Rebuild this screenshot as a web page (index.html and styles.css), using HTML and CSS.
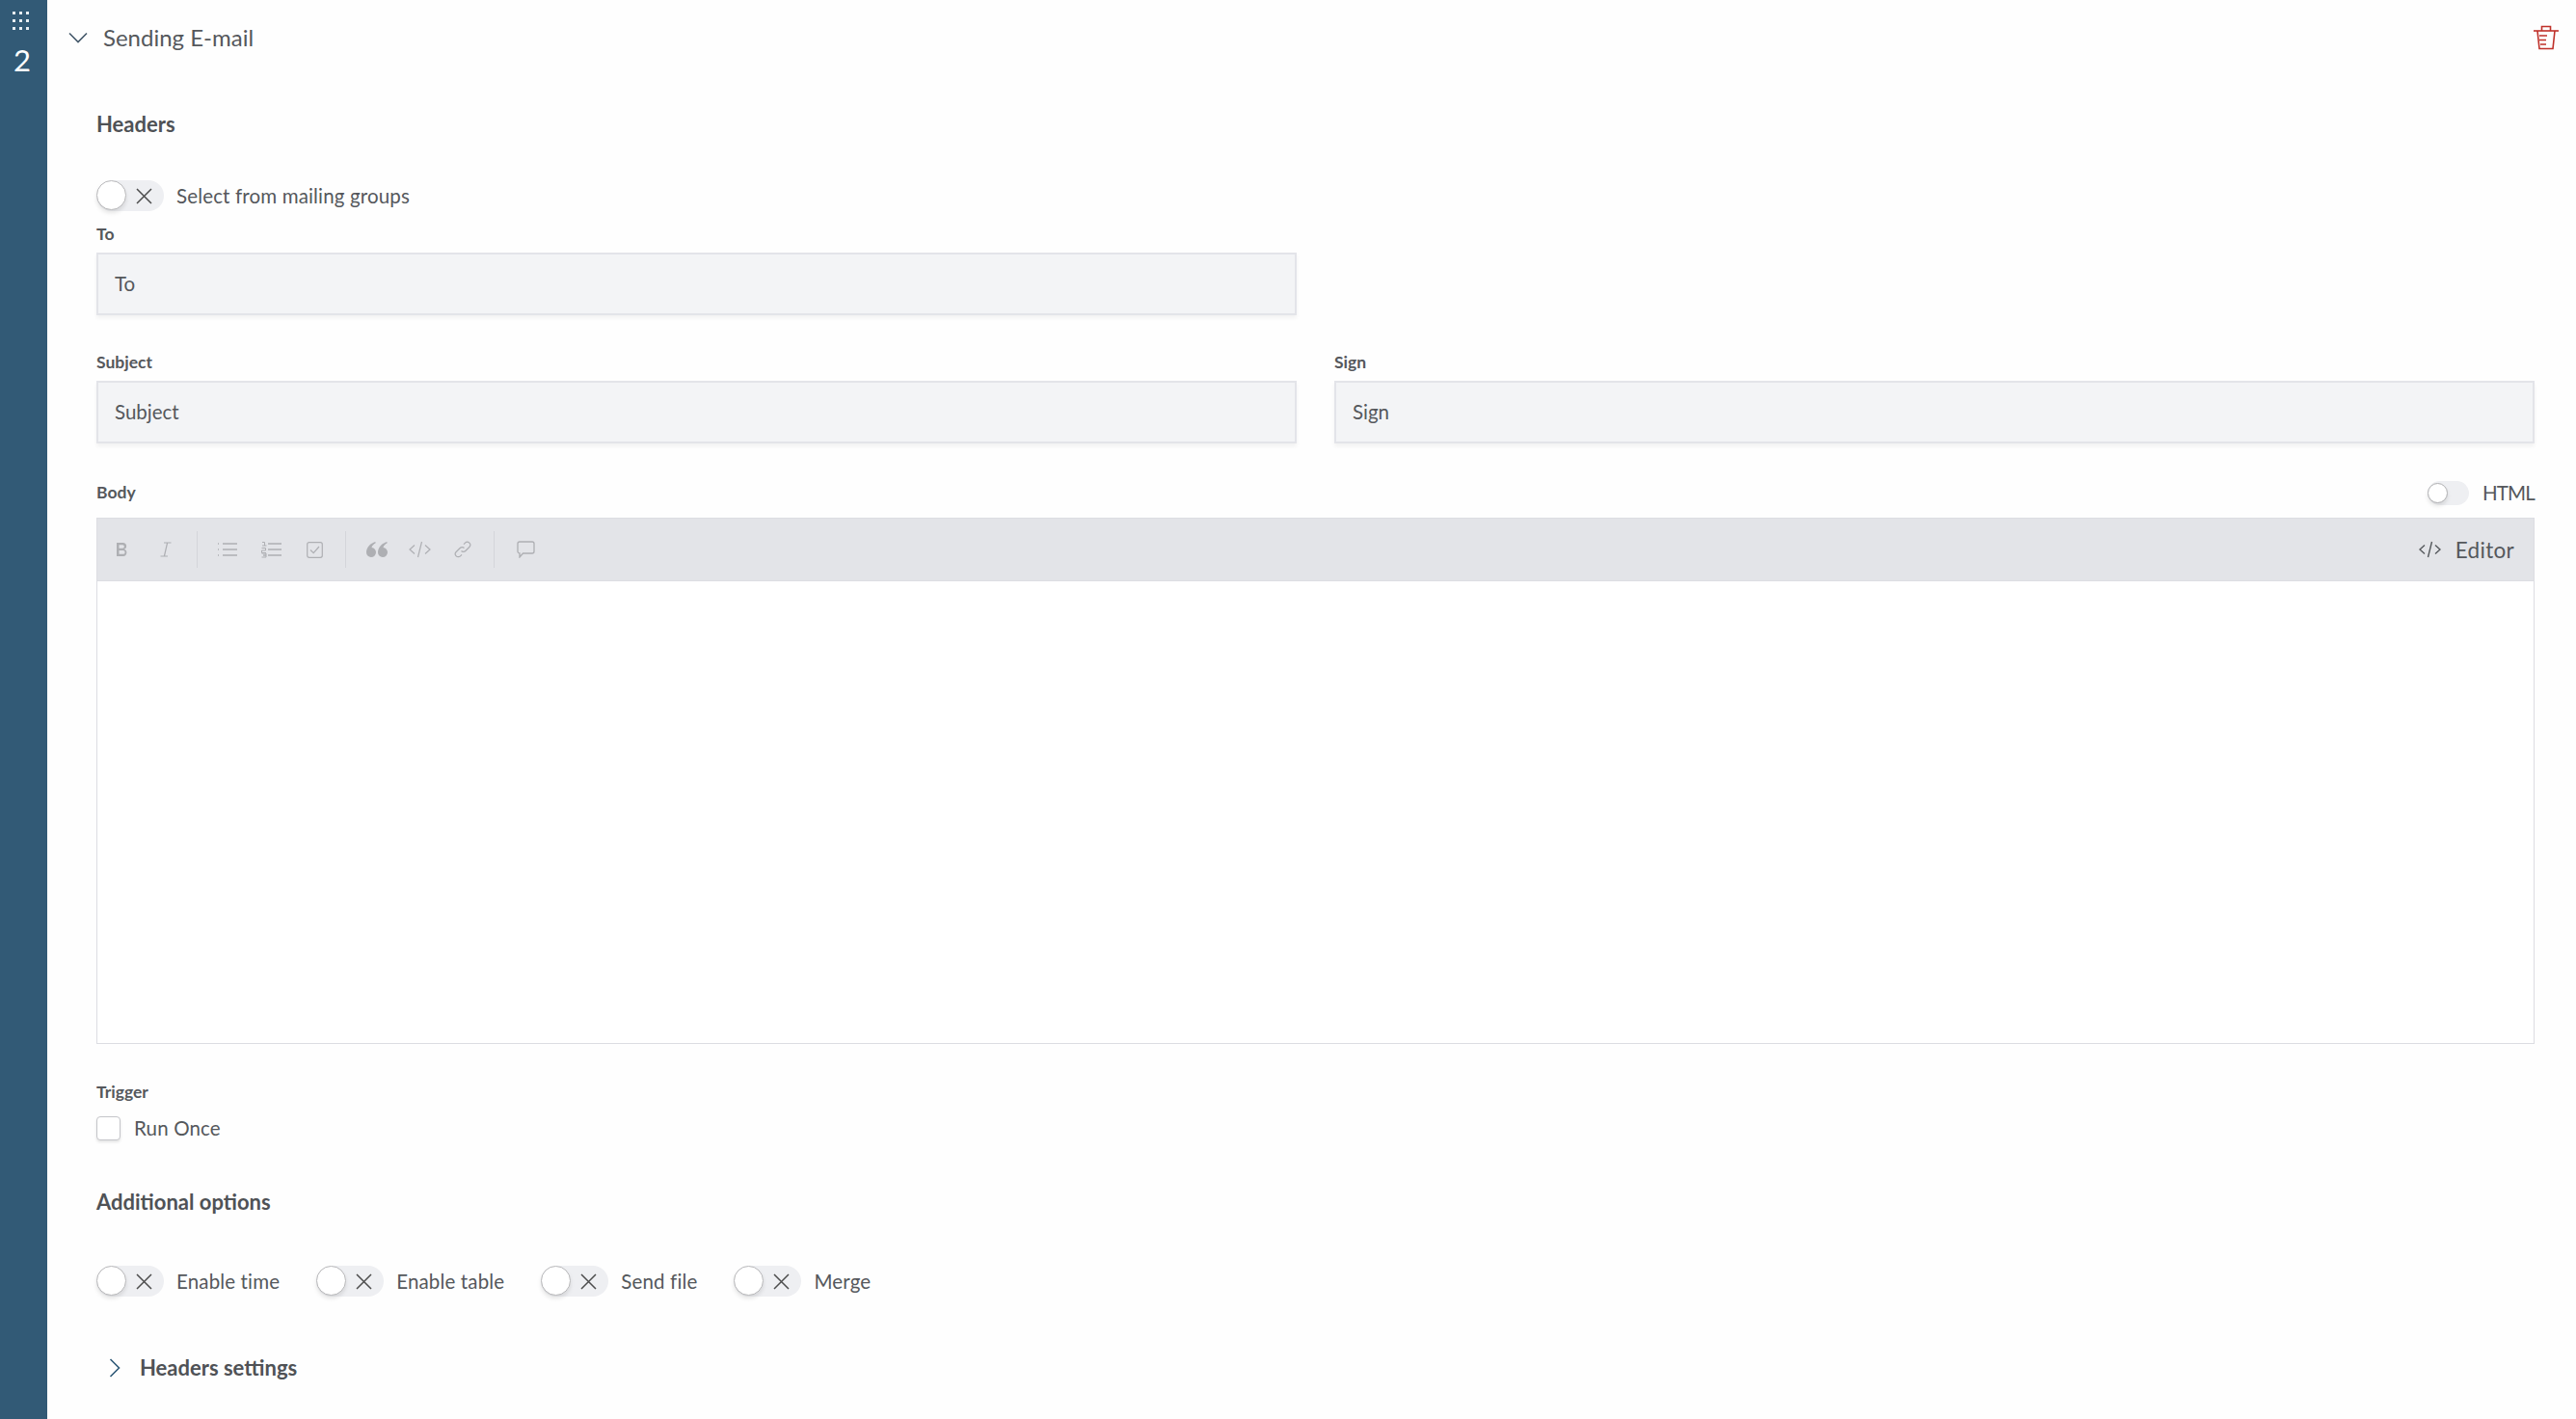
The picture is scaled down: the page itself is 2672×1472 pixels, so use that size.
FILE: index.html
```html
<!DOCTYPE html>
<html lang="en">
<head>
<meta charset="utf-8">
<title>Sending E-mail</title>
<link rel="stylesheet" href="styles.css">
</head>
<body>
<div class="page">
  <aside class="rail">
    <svg class="rail-grip" width="18" height="20" viewBox="0 0 18 20"><g fill="#e8eef2"><rect x="0" y="0" width="3" height="3"/><rect x="7" y="0" width="3" height="3"/><rect x="14" y="0" width="3" height="3"/><rect x="0" y="8" width="3" height="3"/><rect x="7" y="8" width="3" height="3"/><rect x="14" y="8" width="3" height="3"/><rect x="0" y="16" width="3" height="3"/><rect x="7" y="16" width="3" height="3"/><rect x="14" y="16" width="3" height="3"/></g></svg>
    <div class="rail-num">2</div>
  </aside>
  <main class="main">
    <header class="top">
      <svg class="chev" width="20" height="12" viewBox="0 0 20 12"><path d="M1 1.500l9 9 9-9" fill="none" stroke="#44586a" stroke-width="1.600"/></svg>
      <h1 class="title">Sending E-mail</h1>
      <svg class="trash" width="26" height="26" viewBox="0 0 26 26"><g fill="none" stroke="#bf3029" stroke-width="1.600"><path d="M0 6h26"/><path d="M8.500 6V1.500h9V6"/><path d="M4 6l2 18.500h14L22 6"/><path d="M6 11h8M6 15.500h7M7 20h6"/></g></svg>
    </header>
    <div class="content">
      <h2 class="section-h headers-h">Headers</h2>
      <div class="toggle-row mail-row">
        <span class="toggle"><span class="thumb"></span><svg class="x" width="17" height="17" viewBox="0 0 17 17"><path d="M1 1l15 15M16 1L1 16" stroke="#4d4d4d" stroke-width="1.500"/></svg></span>
        <span class="tlabel">Select from mailing groups</span>
      </div>
      <div class="grid">
        <div class="field">
          <label class="flabel">To</label>
          <div class="input">To</div>
        </div>
      </div>
      <div class="grid grid-2">
        <div class="field">
          <label class="flabel">Subject</label>
          <div class="input">Subject</div>
        </div>
        <div class="field">
          <label class="flabel">Sign</label>
          <div class="input">Sign</div>
        </div>
      </div>
      <div class="body-head">
        <span class="flabel">Body</span>
        <span class="html-switch"><span class="toggle small"><span class="thumb"></span></span><span class="tlabel html-label">HTML</span></span>
      </div>
      <div class="editor">
        <div class="toolbar">
          <span class="tool"><svg width="14" height="16" viewBox="0 0 14 16"><path d="M1 1h6.500a3.500 3.500 0 0 1 1.500 6.700A3.800 3.800 0 0 1 8 15H1z M3.500 3.200v3.600h3.600a1.800 1.800 0 0 0 0-3.600z M3.500 9v3.800h4.200a1.900 1.900 0 0 0 0-3.800z" fill="#aeafb3" fill-rule="evenodd"/></svg></span>
          <span class="tool"><svg width="12" height="16" viewBox="0 0 12 16"><path d="M4 1h7.500M.5 15H8M7.600 1L4.400 15" fill="none" stroke="#aeafb3" stroke-width="1.200"/></svg></span>
          <span class="sep"></span>
          <span class="tool"><svg width="20" height="16" viewBox="0 0 20 16"><path d="M5 2h15M5 8h15M5 14h15" stroke="#aeafb3" stroke-width="1.300"/><path d="M0 2h2M0 8h2M0 14h2" stroke="#aeafb3" stroke-width="1.300" stroke-dasharray="1 1"/></svg></span>
          <span class="tool"><svg width="21" height="18" viewBox="0 0 21 18"><path d="M7 3h14M7 9h14M7 15h14" stroke="#aeafb3" stroke-width="1.300"/><path d="M1 1.500h2.500V5M1 5h4.500M.5 7.500h4v2.500h-4v2.500h4.500M.5 13h4.500v2H2h3v2H.5" fill="none" stroke="#aeafb3" stroke-width="1"/></svg></span>
          <span class="tool"><svg width="17" height="17" viewBox="0 0 17 17"><rect x=".7" y=".7" width="15.600" height="15.600" rx="2" fill="none" stroke="#aeafb3" stroke-width="1.200"/><path d="M4 8.500l3.200 3.200L13 5" fill="none" stroke="#aeafb3" stroke-width="1.200"/></svg></span>
          <span class="sep"></span>
          <span class="tool"><svg width="22" height="16" viewBox="0 0 22 16"><path d="M9.500 0C4 1.500 0 6 0 11A5 5 0 1 0 5.500 6C6 4 7.500 2.500 9.500 1.500z M21.500 0C16 1.500 12 6 12 11A5 5 0 1 0 17.500 6C18 4 19.500 2.500 21.500 1.500z" fill="#aeafb3"/></svg></span>
          <span class="tool"><svg width="23" height="18" viewBox="0 0 23 18"><path d="M6 4.500L1 9l5 4.500M17 4.500L22 9l-5 4.500M13.500 1l-4 16" fill="none" stroke="#aeafb3" stroke-width="1.200"/></svg></span>
          <span class="tool"><svg width="18" height="18" viewBox="0 0 18 18"><g fill="none" stroke="#aeafb3" stroke-width="1.200"><path d="M7.500 10.500a3 3 0 0 0 4.300 0l4-4a3 3 0 0 0-4.300-4.300L10 3.700"/><path d="M10.500 7.500a3 3 0 0 0-4.300 0l-4 4a3 3 0 0 0 4.300 4.300L8 14.300"/></g></svg></span>
          <span class="sep"></span>
          <span class="tool"><svg width="19" height="18" viewBox="0 0 19 18"><path d="M3 1h13a2 2 0 0 1 2 2v8a2 2 0 0 1-2 2H6.500L3 17v-4a2 2 0 0 1-2-2V3a2 2 0 0 1 2-2z" fill="none" stroke="#aeafb3" stroke-width="1.300"/></svg></span>
          <span class="editor-mode"><svg width="23" height="18" viewBox="0 0 23 18"><path d="M6 4.500L1 9l5 4.500M17 4.500L22 9l-5 4.500M13.500 1l-4 16" fill="none" stroke="#55585c" stroke-width="1.400"/></svg><span>Editor</span></span>
        </div>
        <div class="editor-body"></div>
      </div>
      <div class="trigger">
        <span class="flabel">Trigger</span>
        <div class="check-row"><span class="check"></span><span class="tlabel">Run Once</span></div>
      </div>
      <h2 class="section-h options-h">Additional options</h2>
      <div class="options">
        <div class="toggle-row"><span class="toggle"><span class="thumb"></span><svg class="x" width="17" height="17" viewBox="0 0 17 17"><path d="M1 1l15 15M16 1L1 16" stroke="#4d4d4d" stroke-width="1.500"/></svg></span><span class="tlabel">Enable time</span></div>
        <div class="toggle-row"><span class="toggle"><span class="thumb"></span><svg class="x" width="17" height="17" viewBox="0 0 17 17"><path d="M1 1l15 15M16 1L1 16" stroke="#4d4d4d" stroke-width="1.500"/></svg></span><span class="tlabel">Enable table</span></div>
        <div class="toggle-row"><span class="toggle"><span class="thumb"></span><svg class="x" width="17" height="17" viewBox="0 0 17 17"><path d="M1 1l15 15M16 1L1 16" stroke="#4d4d4d" stroke-width="1.500"/></svg></span><span class="tlabel">Send file</span></div>
        <div class="toggle-row"><span class="toggle"><span class="thumb"></span><svg class="x" width="17" height="17" viewBox="0 0 17 17"><path d="M1 1l15 15M16 1L1 16" stroke="#4d4d4d" stroke-width="1.500"/></svg></span><span class="tlabel">Merge</span></div>
      </div>
      <div class="collapse">
        <svg width="12" height="20" viewBox="0 0 12 20"><path d="M1.500 1l9 9-9 9" fill="none" stroke="#2f5a78" stroke-width="1.600"/></svg>
        <span class="section-h">Headers settings</span>
      </div>
    </div>
  </main>
</div>
</body>
</html>
```

FILE: styles.css
```css
* { box-sizing: border-box; }
html, body { margin: 0; height: 100%; }
body {
  background: #fefefe;
  color: #55585c;
  font-family: "Lato", "Liberation Sans", sans-serif;
  font-size: 20px;
  overflow: hidden;
}
.page { display: flex; height: 1472px; }
.rail {
  flex: 0 0 49px;
  background: #325a76;
  display: flex;
  flex-direction: column;
  align-items: center;
  padding-top: 12px;
  color: #fff;
}
.rail-grip { display: block; margin-left: -5px; }
.rail-num { font-size: 31px; line-height: 36px; margin-top: 12px; margin-left: -3px; }
.main { flex: 1; min-width: 0; display: flex; flex-direction: column; }
.top { display: flex; align-items: center; height: 78px; padding: 0 18px 0 22px; }
.chev { margin-right: 16px; }
.title { margin: 0; font-size: 24px; font-weight: 400; line-height: 30px; flex: 1; }
.trash { display: block; }
.content { padding: 0 43px 0 51px; display: flex; flex-direction: column; }
.section-h { margin: 0; font-size: 22px; font-weight: 700; line-height: 30px; color: #4f5256; }
.headers-h { margin-top: 36px; }
.toggle-row { display: flex; align-items: center; gap: 13px; }
.mail-row { margin-top: 43px; }
.toggle {
  position: relative;
  display: flex;
  align-items: center;
  justify-content: flex-end;
  width: 70px;
  height: 32px;
  padding-right: 12px;
  background: #eeeff2;
  border-radius: 16px;
  flex: none;
}
.thumb {
  position: absolute;
  left: 0;
  top: 0;
  width: 31px;
  height: 31px;
  background: #fff;
  border: 1px solid #b9b9bb;
  border-radius: 50%;
  box-shadow: 0 3px 4px rgba(0,0,0,.1);
}
.x { display: block; }
.tlabel { font-size: 20.500px; line-height: 26px; letter-spacing: .15px; white-space: nowrap; }
.html-label { letter-spacing: -.8px; }
.grid { display: grid; grid-template-columns: 1245px; column-gap: 39px; }
.grid-2 { grid-template-columns: 1245px 1245px; margin-top: 37px; }
.mail-row + .grid { margin-top: 12px; }
.flabel { display: block; font-size: 17.500px; font-weight: 700; line-height: 24px; color: #55585c; }
.input {
  height: 65px;
  margin-top: 7px;
  padding: 0 17px 2px;
  display: flex;
  align-items: center;
  background: #f3f4f6;
  border: 2px solid #e3e4e9;
  font-size: 20.500px;
  box-shadow: 0 3px 4px rgba(0,0,0,.05);
}
.body-head { display: flex; align-items: center; justify-content: space-between; height: 32px; margin-top: 35px; }
.html-switch { display: flex; align-items: center; gap: 14px; }
.toggle.small { width: 43px; height: 25px; padding: 0; }
.toggle.small .thumb { width: 21px; height: 21px; top: 2px; border-color: #b0b0b2; }
.editor { margin-top: 10px; border: 1px solid #dcdde2; }
.toolbar {
  display: flex;
  align-items: center;
  height: 65px;
  padding: 0 20px 0 3.500px;
  background: #e3e4e8;
  border-bottom: 1px solid #dcdde2;
}
.tool { flex: 0 0 44.800px; display: flex; align-items: center; justify-content: center; }
.tool svg { display: block; }
.sep { flex: 0 0 1px; height: 38px; margin: 0 9.500px; background: #d4d5da; }
.editor-mode { margin-left: auto; display: flex; align-items: center; gap: 15px; font-size: 22.500px; letter-spacing: .3px; }
.editor-body { height: 479px; background: #fff; }
.trigger { margin-top: 38px; }
.check-row { display: flex; align-items: center; gap: 14px; margin-top: 12px; }
.check {
  width: 25px;
  height: 25px;
  background: #fff;
  border: 1px solid #c4c5c9;
  border-radius: 4px;
  box-shadow: 0 2px 3px rgba(0,0,0,.1);
}
.options-h { margin-top: 49px; }
.options { display: flex; gap: 38px; margin-top: 51px; }
.collapse { display: flex; align-items: center; gap: 20px; margin-top: 59px; padding-left: 13px; }
.collapse svg { display: block; }
```
